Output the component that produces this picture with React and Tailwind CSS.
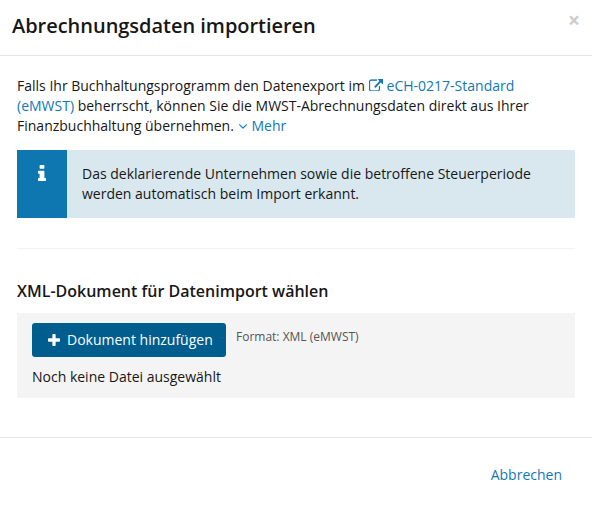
function ExternalLink() {
  return (
    <svg viewBox="0 64 1792 1472" preserveAspectRatio="none" className="mr-1 inline-block h-[12.5px] w-[14px] align-baseline" fill="currentColor" stroke="currentColor" strokeWidth="30">
      <path d="M1408 928v320q0 119-84.500 203.500t-203.500 84.500h-832q-119 0-203.500-84.500t-84.500-203.500v-832q0-119 84.500-203.500t203.500-84.500h704q14 0 23 9t9 23v64q0 14-9 23t-23 9h-704q-66 0-113 47t-47 113v832q0 66 47 113t113 47h832q66 0 113-47t47-113v-320q0-14 9-23t23-9h64q14 0 23 9t9 23zm384-864v512q0 26-19 45t-45 19-45-19l-176-176-652 652q-10 10-23 10t-23-10l-114-114q-10-10-10-23t10-23l652-652-176-176q-19-19-19-45t19-45 45-19h512q26 0 45 19t19 45z" />
    </svg>
  );
}

function AngleDown() {
  return (
    <svg viewBox="397 676 998 559" className="mr-[5px] ml-px inline-block h-[5px] w-2 align-[2px]" fill="currentColor">
      <path d="M1395 736q0 13-10 23l-466 466q-10 10-23 10t-23-10l-466-466q-10-10-10-23t10-23l50-50q10-10 23-10t23 10l393 393 393-393q10-10 23-10t23 10l50 50q10 10 10 23z" />
    </svg>
  );
}

function Info() {
  return (
    <svg viewBox="576 128 640 1408" className="h-4 w-2" preserveAspectRatio="none" fill="currentColor">
      <path d="M1216 1344v128q0 26-19 45t-45 19h-512q-26 0-45-19t-19-45v-128q0-26 19-45t45-19h64v-384h-64q-26 0-45-19t-19-45v-128q0-26 19-45t45-19h384q26 0 45 19t19 45v576h64q26 0 45 19t19 45zm-128-1152v192q0 26-19 45t-45 19h-256q-26 0-45-19t-19-45v-192q0-26 19-45t45-19h256q26 0 45 19t19 45z" />
    </svg>
  );
}

function Plus() {
  return (
    <svg viewBox="192 128 1408 1408" className="mr-[7px] h-3 w-3" fill="currentColor">
      <path d="M1600 736v192q0 40-28 68t-68 28h-416v416q0 40-28 68t-68 28h-192q-40 0-68-28t-28-68v-416h-416q-40 0-68-28t-28-68v-192q0-40 28-68t68-28h416v-416q0-40 28-68t68-28h192q40 0 68 28t28 68v416h416q40 0 68 28t28 68z" />
    </svg>
  );
}

export default function App() {
  return (
    <div className="h-[508px] w-[592px] overflow-hidden bg-white font-['Open_Sans','Noto_Sans',sans-serif] text-[14px] leading-5 text-[#171717]">
      <header className="flex h-14 items-start justify-between border-b border-[#e5e5e5] pt-3 pr-3 pl-3">
        <h1 className="text-[20px] leading-7 font-semibold tracking-[-0.03px]">Abrechnungsdaten importieren</h1>
        <button className="text-[21px] leading-4 font-bold text-[#ccc]">×</button>
      </header>
      <main className="h-[382px] border-b border-[#e5e5e5] px-[17px] pt-5">
        <p>
          Falls Ihr Buchhaltungsprogramm den Datenexport im{' '}
          <a className="text-[#1178b3]"><ExternalLink />eCH-0217-Standard<br />(eMWST)</a>{' '}
          beherrscht, können Sie die MWST-Abrechnungsdaten direkt aus Ihrer<br />Finanzbuchhaltung übernehmen.{' '}
          <a className="text-[#1178b3]"><AngleDown />Mehr</a>
        </p>
        <div className="mt-[14px] flex h-[68px] bg-[#d8e8ee]">
          <div className="flex w-[50px] justify-center bg-[#0f77af] pt-[15px] text-white"><Info /></div>
          <p className="pt-[14px] pl-[15px]">Das deklarierende Unternehmen sowie die betroffene Steuerperiode<br />werden automatisch beim Import erkannt.</p>
        </div>
        <hr className="mt-[30px] border-[#f2f2f2]" />
        <h2 className="mt-8 text-[16px] leading-5 font-semibold">XML-Dokument für Datenimport wählen</h2>
        <section className="mt-3 h-[85px] bg-[#f4f4f4] px-[15px] pt-[10px]">
          <div className="flex">
            <button className="flex h-[34px] w-[194px] items-center rounded-[3px] bg-[#005e8f] pl-4 text-white"><Plus />Dokument hinzufügen</button>
            <span className="ml-[10px] pt-1 text-[12px] text-[#555]">Format: XML (eMWST)</span>
          </div>
          <p className="mt-[10px]">Noch keine Datei ausgewählt</p>
        </section>
      </main>
      <footer className="flex justify-end pt-[27px] pr-[30px]"><a className="text-[#1178b3]">Abbrechen</a></footer>
    </div>
  );
}
